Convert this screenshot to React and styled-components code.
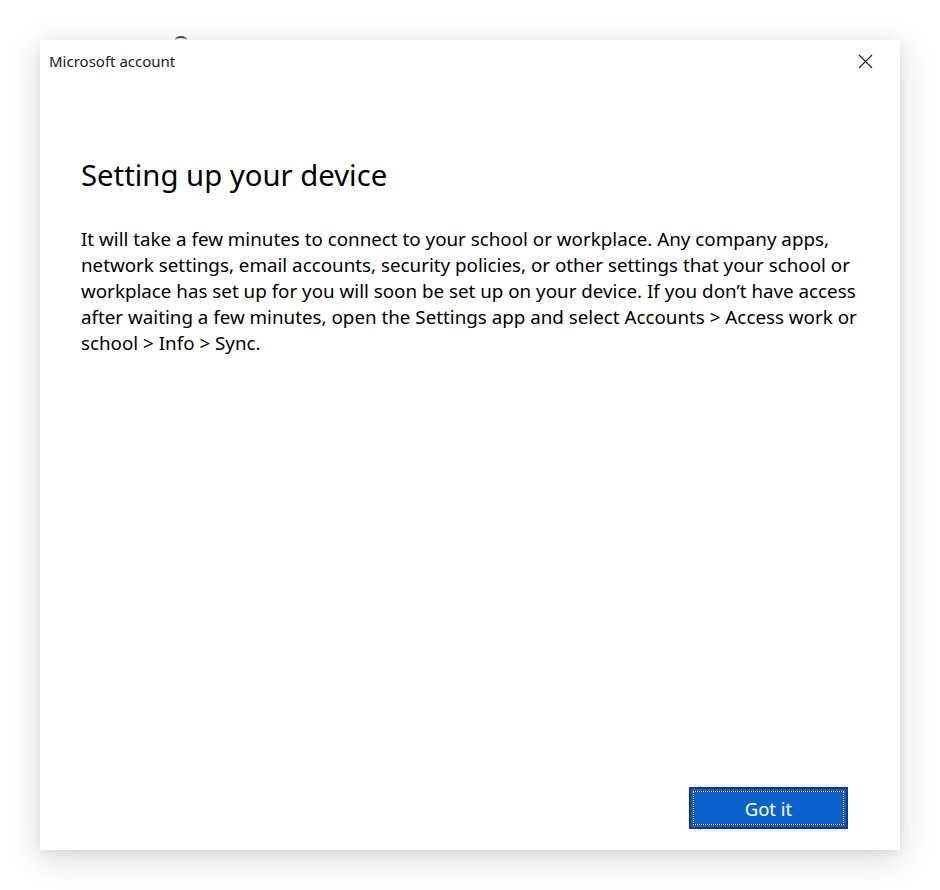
import React from 'react';
import styled, { createGlobalStyle } from 'styled-components';

const GlobalStyle = createGlobalStyle`
  html, body {
    margin: 0;
    padding: 0;
    background: #ffffff;
  }
  body {
    font-family: "Noto Sans", "Open Sans", sans-serif;
    color: #000;
  }
`;

const Page = styled.div`
  width: 940px;
  height: 890px;
  padding: 40px;
  box-sizing: border-box;
  position: relative;
`;

const Window = styled.div`
  width: 860px;
  height: 810px;
  background: #ffffff;
  box-shadow: 0 8px 32px rgba(0, 0, 0, 0.16), 0 2px 8px rgba(0, 0, 0, 0.06);
  display: flex;
  flex-direction: column;
  box-sizing: border-box;
`;

const TitleBar = styled.div`
  height: 42px;
  display: flex;
  align-items: center;
  justify-content: space-between;
  padding: 0 26px 0 9px;
`;

const Title = styled.span`
  font-size: 15px;
  color: #1a1a1a;
`;

const CloseButton = styled.button`
  border: none;
  background: none;
  padding: 0;
  width: 18px;
  height: 18px;
  display: flex;
  align-items: center;
  justify-content: center;
  cursor: pointer;
`;

const Content = styled.div`
  flex: 1;
  padding: 73px 41px 0 41px;
  display: flex;
  flex-direction: column;
`;

const Heading = styled.h1`
  margin: 0 0 31px;
  font-size: 29.3px;
  font-weight: 400;
  line-height: 40px;
  color: #000;
`;

const Body = styled.p`
  margin: 0;
  font-size: 18.8px;
  line-height: 26px;
  color: #000;
`;

const Footer = styled.div`
  display: flex;
  justify-content: flex-end;
  padding: 0 52px 21px 0;
`;

const PrimaryButton = styled.button`
  width: 159px;
  height: 42px;
  background: #0b62cc;
  border: 2px solid #003c8f;
  padding: 2px;
  box-sizing: border-box;
  cursor: pointer;
  display: flex;
`;

const FocusRing = styled.span`
  flex: 1;
  display: flex;
  align-items: center;
  justify-content: center;
  border: 1px dotted #ffffff;
  background: linear-gradient(#0b62cc, #0b62cc) padding-box, #000 border-box;
  color: #ffffff;
  font-family: "Noto Sans", "Open Sans", sans-serif;
  font-size: 18.5px;
`;

const Artifact = styled.span`
  position: absolute;
  left: 175px;
  top: 36px;
  width: 12px;
  height: 8px;
  border-top: 2px solid #444;
  border-radius: 50% 50% 0 0;
  box-sizing: border-box;
`;

export default function App() {
  return (
    <>
      <GlobalStyle />
      <Page>
        <Artifact />
        <Window>
          <TitleBar>
            <Title>Microsoft account</Title>
            <CloseButton aria-label="Close">
              <svg width="15" height="15" viewBox="0 0 15 15">
                <path d="M1 1 L14 14 M14 1 L1 14" stroke="#222" strokeWidth="1.1" fill="none" />
              </svg>
            </CloseButton>
          </TitleBar>
          <Content>
            <Heading>Setting up your device</Heading>
            <Body>
              It will take a few minutes to connect to your school or workplace. Any company apps,
              network settings, email accounts, security policies, or other settings that your school or
              workplace has set up for you will soon be set up on your device. If you don’t have access
              after waiting a few minutes, open the Settings app and select Accounts &gt; Access work or
              school &gt; Info &gt; Sync.
            </Body>
          </Content>
          <Footer>
            <PrimaryButton>
              <FocusRing>Got it</FocusRing>
            </PrimaryButton>
          </Footer>
        </Window>
      </Page>
    </>
  );
}
